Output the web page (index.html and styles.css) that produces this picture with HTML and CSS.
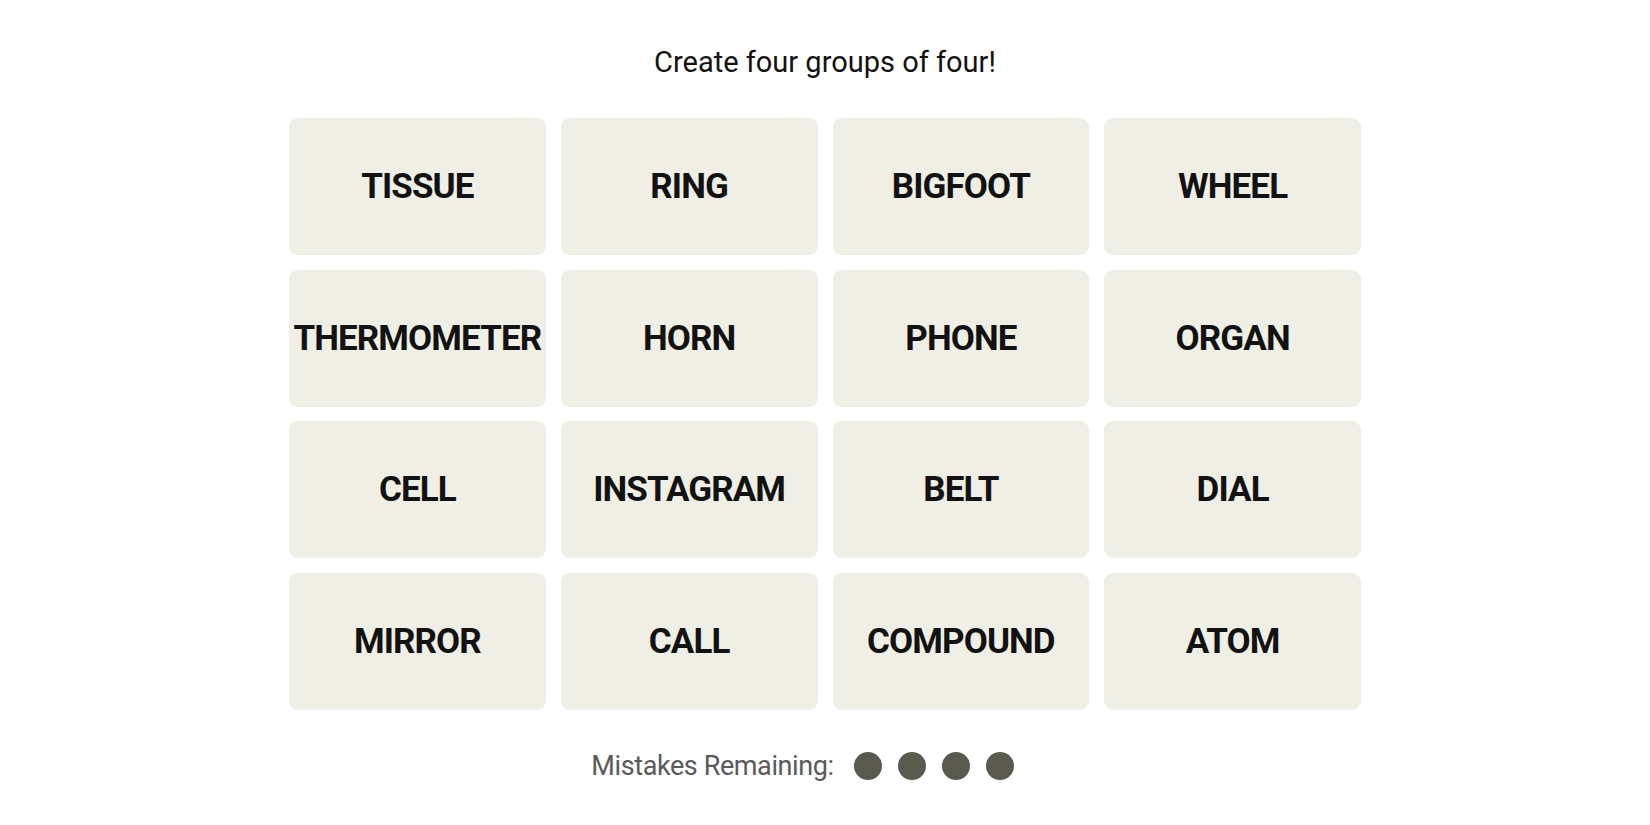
FILE: index.html
```html
<!DOCTYPE html>
<html lang="en">
<head>
<meta charset="utf-8">
<title>Connections</title>
<link rel="stylesheet" href="styles.css">
</head>
<body>
<main class="game">
  <p class="prompt">Create four groups of four!</p>
  <section class="board">
    <button class="tile">TISSUE</button>
    <button class="tile">RING</button>
    <button class="tile">BIGFOOT</button>
    <button class="tile">WHEEL</button>
    <button class="tile">THERMOMETER</button>
    <button class="tile">HORN</button>
    <button class="tile">PHONE</button>
    <button class="tile">ORGAN</button>
    <button class="tile">CELL</button>
    <button class="tile">INSTAGRAM</button>
    <button class="tile">BELT</button>
    <button class="tile">DIAL</button>
    <button class="tile">MIRROR</button>
    <button class="tile">CALL</button>
    <button class="tile">COMPOUND</button>
    <button class="tile">ATOM</button>
  </section>
  <div class="mistakes">
    <span class="mistakes-label">Mistakes Remaining:</span>
    <span class="dots">
      <span class="dot"></span>
      <span class="dot"></span>
      <span class="dot"></span>
      <span class="dot"></span>
    </span>
  </div>
</main>
</body>
</html>
```
FILE: styles.css
```css
html, body {
  margin: 0;
  padding: 0;
  background: #ffffff;
}

body {
  font-family: Roboto, "Liberation Sans", sans-serif;
  color: #121212;
}

.game {
  display: flex;
  flex-direction: column;
  align-items: center;
  padding-top: 44px;
}

.prompt {
  margin: 0;
  font-size: 29px;
  line-height: 36px;
  font-weight: 400;
  color: #121212;
}

.board {
  margin-top: 38px;
  width: 1072px;
  display: grid;
  grid-template-columns: repeat(4, 1fr);
  grid-auto-rows: 137px;
  column-gap: 15px;
  row-gap: 14.5px;
}

.tile {
  border: none;
  margin: 0;
  padding: 0;
  background: #efefe6;
  border-radius: 9px;
  font-family: Roboto, "Liberation Sans", sans-serif;
  font-weight: 700;
  font-size: 35px;
  letter-spacing: -0.9px;
  color: #121212;
  display: flex;
  align-items: center;
  justify-content: center;
  white-space: nowrap;
}

.mistakes {
  margin-top: 38px;
  display: flex;
  align-items: center;
  height: 36px;
}

.mistakes-label {
  font-size: 27px;
  line-height: 36px;
  letter-spacing: -0.4px;
  color: #5a5a5a;
}

.dots {
  display: flex;
  gap: 16px;
  margin-left: 20px;
  margin-right: 45px;
}

.dot {
  width: 28px;
  height: 28px;
  border-radius: 50%;
  background: #5a594e;
}
```
